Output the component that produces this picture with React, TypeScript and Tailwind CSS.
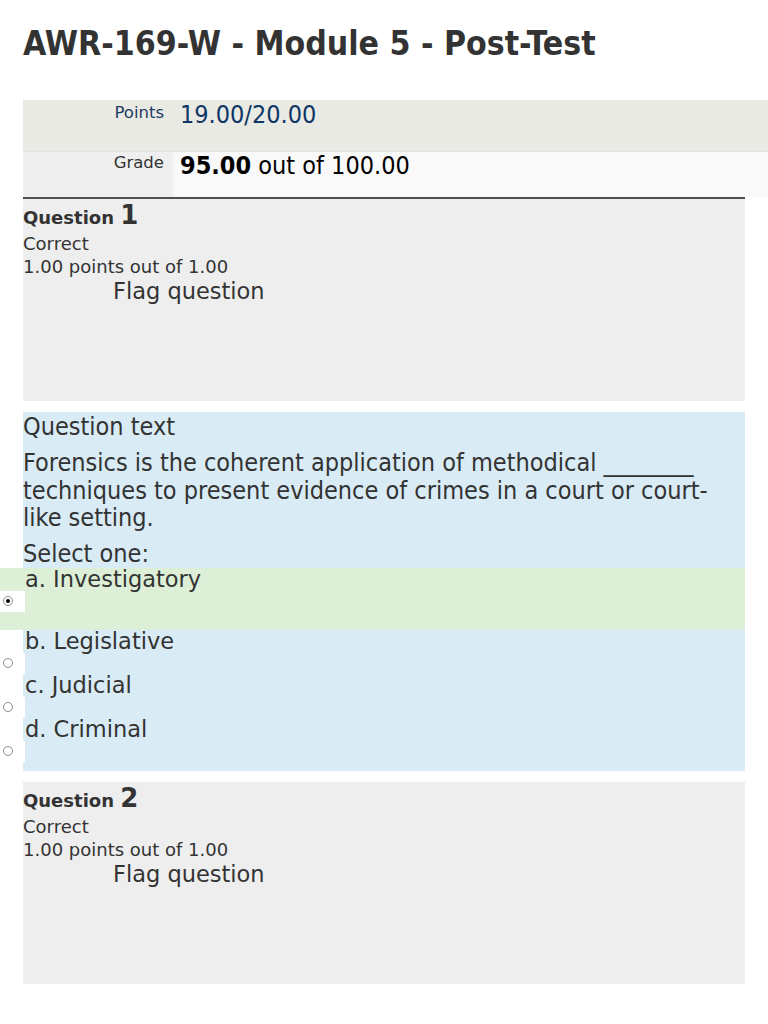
const answers = [
  { key: 'a', label: 'Investigatory', checked: true },
  { key: 'b', label: 'Legislative', checked: false },
  { key: 'c', label: 'Judicial', checked: false },
  { key: 'd', label: 'Criminal', checked: false },
];

function Radio({ checked }: { checked: boolean }) {
  return (
    <span className="ml-[3px] flex h-[10px] w-[10px] items-center justify-center rounded-full border border-[#8a8a8a] bg-white">
      {checked && <span className="h-[4px] w-[4px] rounded-full bg-black" />}
    </span>
  );
}

function QuestionInfo({ num }: { num: number }) {
  return (
    <div className="h-[202px] bg-[#eeeeee] text-[#333]">
      <div className="pt-[2px] font-['DejaVu_Sans'] text-[18px] font-bold leading-[28px]">
        Question <span className="text-[26px]">{num}</span>
      </div>
      <div className="font-['DejaVu_Sans'] text-[18px] leading-[23px]">Correct</div>
      <div className="font-['DejaVu_Sans'] text-[18px] leading-[23px]">1.00 points out of 1.00</div>
      <div className="flex">
        <div className="w-[90px]" />
        <div className="font-['DejaVu_Sans'] text-[22.5px] leading-[26px]">Flag question</div>
      </div>
      <div className="mt-[-6px] h-[92px] w-[90px] bg-[#efefef]" />
    </div>
  );
}

export default function App() {
  return (
    <div className="min-h-[1024px] bg-white text-[#333]">
      <h1 className="px-[23px] pt-[24px] font-['DejaVu_Sans_Condensed','DejaVu_Sans',sans-serif] text-[33.5px] font-bold leading-[40px] text-[#333]">
        AWR-169-W - Module 5 - Post-Test
      </h1>

      <div className="ml-[23px] mt-[36px]">
        <div className="grid h-[51px] grid-cols-[150px_1fr] bg-[#eaeae5]">
          <div className="pr-[9px] pt-[3px] text-right font-['DejaVu_Sans',sans-serif] text-[16.5px] leading-[20px] text-[#1d3b63]">
            Points
          </div>
          <div className="pl-[7px] pt-[1px] font-['DejaVu_Sans_Condensed','DejaVu_Sans',sans-serif] text-[25px] leading-[28px] text-[#0e3767]">
            19.00/20.00
          </div>
        </div>
        <div className="grid h-[46px] grid-cols-[150px_1fr] border-t border-[#e3e3e3]">
          <div className="bg-[#efefef] pr-[9px] pt-[1px] text-right font-['DejaVu_Sans',sans-serif] text-[16.5px] leading-[20px] text-[#333]">
            Grade
          </div>
          <div className="bg-[#f9f9f9] pl-[7px] font-['DejaVu_Sans_Condensed','DejaVu_Sans',sans-serif] text-[25px] leading-[28px] text-black">
            <span className="font-bold">95.00</span> out of 100.00
          </div>
        </div>
      </div>

      <div className="mx-[23px]">
        <div className="h-[2px] bg-[#505050]" />
        <QuestionInfo num={1} />

        <div className="mt-[11px] h-[359px] bg-[#d9ebf5] font-['DejaVu_Sans_Condensed','DejaVu_Sans',sans-serif] text-[25px] text-[#333]">
          <div className="pt-[1px] leading-[27px]">Question text</div>
          <p className="mt-[9px] pr-[20px] leading-[27.5px]">
            Forensics is the coherent application of methodical ________ techniques to present evidence of crimes in a court or court-like setting.
          </p>
          <div className="mt-[9px] leading-[26px]">Select one:</div>
          <div className="ml-[-23px] mt-[1px]">
            {answers.map((a) => (
              <div key={a.key} className={a.checked ? 'bg-[#ddefd7] pb-[18px]' : ''}>
                <div className="pl-[25px] font-['DejaVu_Sans',sans-serif] text-[22.5px] leading-[23px]">
                  {a.key}. {a.label}
                </div>
                <div className="flex h-[21px] w-[25px] items-center bg-white">
                  <Radio checked={a.checked} />
                </div>
              </div>
            ))}
          </div>
        </div>

        <div className="mt-[11px]">
          <QuestionInfo num={2} />
        </div>
      </div>
    </div>
  );
}
